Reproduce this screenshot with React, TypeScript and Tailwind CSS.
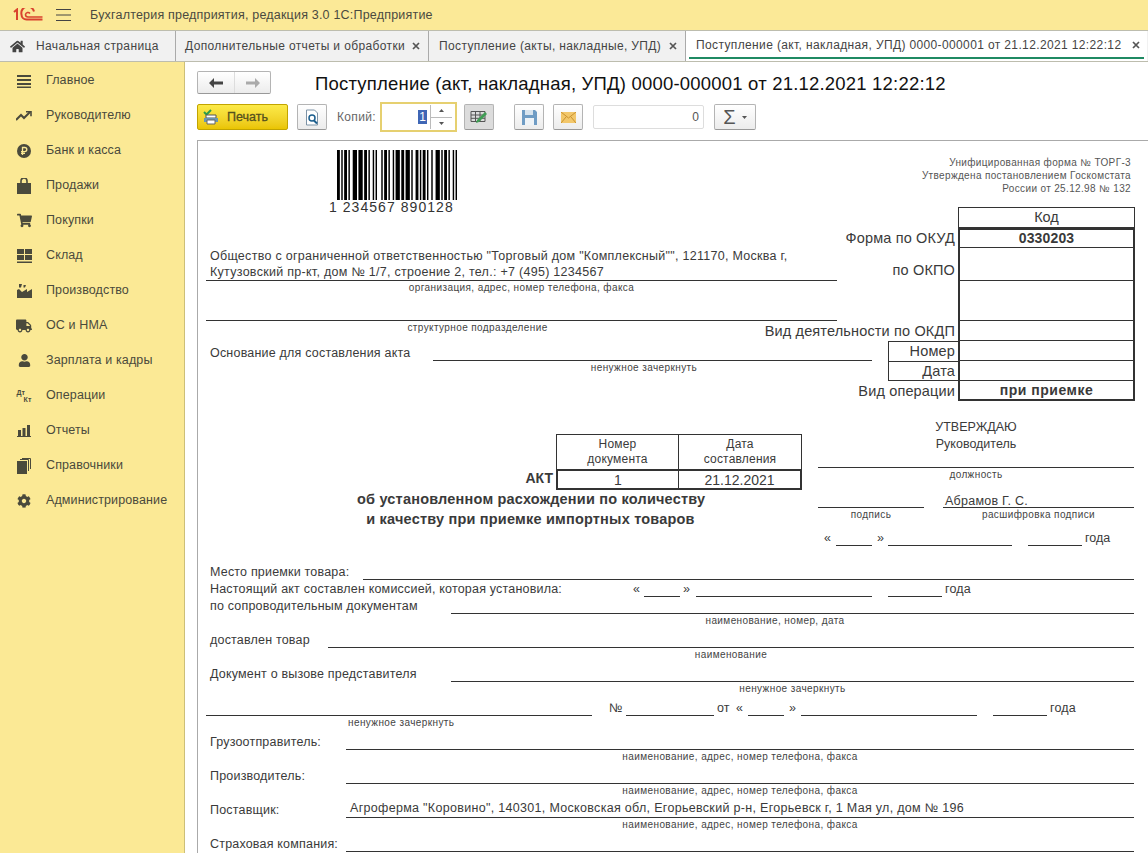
import { FaCog, FaHome, FaShoppingCart, FaTruck, FaUser } from 'react-icons/fa';

const barWidths = [2,1,1,1,2,1,1,2,3,1,3,1,2,1,1,2,1,1,1,3,1,1,2,1,1,2,1,1,3,1,2,1,3,1,1,2,2,1,1,1,2,1,1,2,1,2,3,1,1,1,2,1,1,2,1,1,1];

function Barcode() {
  let x = 0;
  const bars = barWidths.map((w, i) => {
    const rect = i % 2 === 0 ? <rect key={i} x={x} y="0" width={w} height="50" fill="#000" /> : null;
    x += w;
    return rect;
  });
  return (
    <svg width="120" height="50" viewBox={`0 0 ${x} 50`} preserveAspectRatio="none">
      {bars}
    </svg>
  );
}

function Bag() {
  return (
    <svg width="14" height="16" viewBox="0 0 14 16" fill="#4a4a3c">
      <path d="M0 5h14v11H0z" />
      <path d="M4 5V3a3 3 0 0 1 6 0v2" fill="none" stroke="#4a4a3c" strokeWidth="1.6" />
    </svg>
  );
}

const menu = [
  {
    name: 'Главное',
    icon: (
      <svg width="14" height="14" viewBox="0 0 14 14" fill="#4a4a3c">
        <path d="M0 1h14v2H0zM0 5h14v2H0zM0 9h14v2H0zM0 12.5h14v1.5H0z" />
      </svg>
    ),
  },
  {
    name: 'Руководителю',
    icon: (
      <svg width="16" height="10" viewBox="0 0 16 10" fill="none" stroke="#4a4a3c" strokeWidth="2">
        <path d="M0 9l5-5 3 3 6-6" />
        <path d="M10 0.8h5v4.4" strokeWidth="1.6" />
      </svg>
    ),
  },
  {
    name: 'Банк и касса',
    icon: (
      <svg width="14" height="14" viewBox="0 0 14 14">
        <circle cx="7" cy="7" r="7" fill="#4a4a3c" />
        <path d="M5.5 11V3.5h2.2a2 2 0 0 1 0 4.2H4M4 9.3h4" fill="none" stroke="#fbe995" strokeWidth="1.3" />
      </svg>
    ),
  },
  { name: 'Продажи', icon: <Bag /> },
  { name: 'Покупки', icon: <FaShoppingCart size={15} color="#4a4a3c" /> },
  {
    name: 'Склад',
    icon: (
      <svg width="15" height="14" viewBox="0 0 15 14" fill="#4a4a3c">
        <path d="M0 0h7v5H0zM8 0h7v5H8zM0 6h7v5H0zM8 6h7v5H8zM0 12.5h15V14H0z" />
      </svg>
    ),
  },
  {
    name: 'Производство',
    icon: (
      <svg width="15" height="14" viewBox="0 0 15 14" fill="#4a4a3c">
        <path d="M0 14V6l2-1 3 3 5-3v3l5-3v9zM2 0h3l-1 3.5H2zM6.5 1h2.500L8 3.500H6.500z" />
      </svg>
    ),
  },
  { name: 'ОС и НМА', icon: <FaTruck size={16} color="#4a4a3c" /> },
  { name: 'Зарплата и кадры', icon: <FaUser size={13} color="#4a4a3c" /> },
  {
    name: 'Операции',
    icon: (
      <div className="flex w-[15px] flex-col text-[7px] leading-[7px] font-bold text-[#4a4a3c]">
        <span>Дт</span>
        <span className="text-right">Кт</span>
      </div>
    ),
  },
  {
    name: 'Отчеты',
    icon: (
      <svg width="14" height="12" viewBox="0 0 14 12" fill="#4a4a3c">
        <path d="M1 5h3v6H1zM5.500 3h3v8h-3zM10 0h3v11h-3zM0 11h14v1H0z" />
      </svg>
    ),
  },
  {
    name: 'Справочники',
    icon: (
      <svg width="14" height="16" viewBox="0 0 14 16" fill="#4a4a3c">
        <path d="M0 3h10v13H0z" />
        <path d="M3 1.500h8.500V13M5 0.500h8.500V11" fill="none" stroke="#4a4a3c" />
      </svg>
    ),
  },
  { name: 'Администрирование', icon: <FaCog size={14} color="#4a4a3c" /> },
];

function Caption({ children, className }: { children: string; className: string }) {
  return <div className={`h-[16px] text-[10px] leading-[14px] tracking-[0.4px] whitespace-nowrap text-[#444] ${className}`}>{children}</div>;
}

function ToolButton({ children, className = 'bg-gradient-to-b from-white to-[#ececec]' }: { children: React.ReactNode; className?: string }) {
  return (
    <div className={`flex h-[26px] w-[30px] items-center justify-center rounded-[2px] border border-[#b4b4b4] border-b-[#999] ${className}`}>
      {children}
    </div>
  );
}

function CloseMark() {
  return (
    <svg width="8" height="8" viewBox="0 0 8 8" stroke="#555" strokeWidth="1.700">
      <path d="M1 1l6 6M7 1L1 7" />
    </svg>
  );
}

export default function App() {
  return (
    <div className="flex h-screen w-full flex-col overflow-hidden bg-white text-[12px] text-[#333]" style={{ fontFamily: '"Liberation Sans", Arial, sans-serif' }}>
      {/* Top bar */}
      <header className="flex h-[30px] shrink-0 items-center bg-[#fbe997]">
        <svg className="ml-[13px]" width="30" height="14" viewBox="0 0 30 14" fill="none" stroke="#d9432e" strokeWidth="2">
          <path d="M1 4l3-2.500V12" />
          <path d="M21 3.500A5 5 0 0 0 8.500 6.500a5 5 0 0 0 5 5h16" />
          <path d="M17 5.500a2.500 2.500 0 0 0-4.500 1 2.500 2.500 0 0 0 2.500 2.500h14.500" strokeWidth="1.500" />
        </svg>
        <svg className="ml-[13px]" width="15" height="14" viewBox="0 0 15 14" stroke="#444">
          <path d="M0 1.500h15M0 7h15M0 12.500h15" />
        </svg>
        <span className="ml-[19px] text-[12.5px] tracking-[0.2px] text-[#4a4a40]">Бухгалтерия предприятия, редакция 3.0 1С:Предприятие</span>
      </header>

      {/* Tabs */}
      <nav className="flex h-[32px] shrink-0 border-y border-[#bdbdae] bg-[#f1f1f1] text-[12px] tracking-[0.37px] text-[#444]">
        <div className="flex w-[176px] items-center border-r border-[#aaa] pl-[10px]">
          <FaHome size={15} color="#444" />
          <span className="ml-[11px]">Начальная страница</span>
        </div>
        <div className="flex w-[253px] items-center justify-between border-r border-[#aaa] pr-[8px] pl-[9px]">
          <span className="whitespace-nowrap">Дополнительные отчеты и обработки</span>
          <CloseMark />
        </div>
        <div className="flex w-[257px] items-center justify-between border-r border-[#aaa] pr-[8px] pl-[10px]">
          <span className="whitespace-nowrap">Поступление (акты, накладные, УПД)</span>
          <CloseMark />
        </div>
        <div className="flex w-[461px] flex-col bg-white">
          <div className="flex h-[26px] items-center justify-between pt-[2px] pr-[7px] pl-[10px]">
            <span className="whitespace-nowrap">Поступление (акт, накладная, УПД) 0000-000001 от 21.12.2021 12:22:12</span>
            <CloseMark />
          </div>
          <div className="mx-[3px] h-[2px] bg-[#1f8a63]" />
        </div>
      </nav>

      <div className="flex min-h-0 flex-1">
        {/* Sidebar */}
        <aside className="w-[185px] shrink-0 border-r border-[#cdbf78] bg-[#fbe995] pt-[1px]">
          {menu.map((item) => (
            <div key={item.name} className="flex h-[35px] items-center text-[12.500px] tracking-[0.12px] text-[#4a4a3c]">
              <div className="flex w-[46px] justify-center pl-[2px]">{item.icon}</div>
              <span>{item.name}</span>
            </div>
          ))}
        </aside>

        <main className="min-w-0 flex-1 pl-[12px]">
          {/* Title row */}
          <div className="flex h-[41px] items-start pt-[9px]">
            <div className="flex h-[23px] w-[74px] rounded-[2px] border border-[#b4b4b4] border-b-[#999] bg-gradient-to-b from-white to-[#ececec]">
              <div className="flex w-[37px] items-center justify-center border-r border-[#ddd]">
                <svg width="14" height="10" viewBox="0 0 14 10" fill="#444"><path d="M0 5l5-5v3.500h9v3H5V10z" /></svg>
              </div>
              <div className="flex flex-1 items-center justify-center">
                <svg width="14" height="10" viewBox="0 0 14 10" fill="#aaa"><path d="M14 5L9 0v3.500H0v3h9V10z" /></svg>
              </div>
            </div>
            <h1 className="mt-[1px] ml-[44px] text-[18.500px] leading-[23px] tracking-[0.2px] whitespace-nowrap text-[#111]">Поступление (акт, накладная, УПД) 0000-000001 от 21.12.2021 12:22:12</h1>
          </div>

          {/* Toolbar */}
          <div className="flex h-[38px] items-start pt-[1px]">
            <div className="flex h-[26px] w-[91px] items-center rounded-[2px] border border-[#c2a400] bg-gradient-to-b from-[#fcea47] to-[#eac500] pl-[5px] font-bold text-[#55501e]">
              <svg width="16" height="16" viewBox="0 0 16 16">
                <path d="M1 3l2.500 2.500L8 1" fill="none" stroke="#2d9c4a" strokeWidth="2" />
                <path d="M3 6h10v3H3z" fill="#fff" stroke="#555" />
                <path d="M1 9h14v4H1z" fill="#6b96b0" />
                <path d="M4 11h8v4H4z" fill="#fff" stroke="#666" />
              </svg>
              <span className="ml-[8px] text-[12.500px] font-normal [-webkit-text-stroke:0.3px_#55501e]">Печать</span>
            </div>
            <ToolButton className="ml-[9px] bg-gradient-to-b from-white to-[#ececec]">
              <svg width="16" height="17" viewBox="0 0 16 17" fill="none">
                <path d="M2.500 1h8l3 3v12h-11z" fill="#fff" stroke="#7d93a6" />
                <circle cx="8" cy="9" r="3" stroke="#1c5f8e" strokeWidth="1.500" />
                <path d="M10 11.500l3 3" stroke="#1c5f8e" strokeWidth="2" />
              </svg>
            </ToolButton>
            <span className="ml-[10px] w-[43px] text-[12px] leading-[26px] tracking-[0.35px] text-[#666]">Копий:</span>
            <div className="mt-[-2px] flex h-[30px] w-[77px] items-center justify-end border-2 border-[#e6d070] bg-white pr-[3px]">
              <span className="mr-[3px] bg-[#3f66b5] px-[1px] leading-[14px] text-white">1</span>
              <div className="flex h-[24px] w-[22px] flex-col border-l border-[#bbb]">
                <div className="flex flex-1 items-center justify-center border-b border-[#bbb]">
                  <svg width="5" height="3" viewBox="0 0 5 3" fill="#555"><path d="M2.500 0L5 3H0z" /></svg>
                </div>
                <div className="flex flex-1 items-center justify-center">
                  <svg width="5" height="3" viewBox="0 0 5 3" fill="#555"><path d="M2.500 3L5 0H0z" /></svg>
                </div>
              </div>
            </div>
            <ToolButton className="ml-[7px] bg-[#dcdcdc]">
              <svg width="18" height="17" viewBox="0 0 18 17" fill="none">
                <path d="M1 2.500h14v10H1zM1 6h14M1 9.300h14M5.500 2.500v10M10 2.500v10" stroke="#555" />
                <path d="M6 14l1-3 8-8 2 2-8 8z" fill="#3f9d54" />
              </svg>
            </ToolButton>
            <ToolButton className="ml-[20px] bg-gradient-to-b from-white to-[#ececec]">
              <svg width="15" height="15" viewBox="0 0 15 15">
                <path d="M0 0h13l2 2v13H0z" fill="#6f9cc4" />
                <path d="M3 0h8v5H3z" fill="#d8e4ee" />
                <path d="M3 8h9v7H3z" fill="#eef3f7" />
              </svg>
            </ToolButton>
            <ToolButton className="ml-[9px] bg-gradient-to-b from-white to-[#ececec]">
              <svg width="15" height="11" viewBox="0 0 15 11">
                <path d="M0 0h15v11H0z" fill="#f2c76b" />
                <path d="M0 0l7.500 6L15 0M0 11l5-6M15 11l-5-6" fill="none" stroke="#c8922f" />
              </svg>
            </ToolButton>
            <div className="mt-[1px] ml-[10px] flex h-[24px] w-[111px] items-center justify-end rounded-[2px] border border-[#ddd] pr-[4px] tracking-[0.2px] text-[#555]">0</div>
            <div className="ml-[10px] flex h-[26px] w-[42px] items-center justify-center gap-[6px] rounded-[2px] border border-[#b4b4b4] border-b-[#999] bg-gradient-to-b from-white to-[#ececec]">
              <span className="text-[20px] leading-none text-[#555]">Σ</span>
              <svg width="5" height="3" viewBox="0 0 5 3" fill="#555"><path d="M2.500 3L5 0H0z" /></svg>
            </div>
          </div>

          {/* Printed form */}
          <div className="mt-[-1px] h-[713px] overflow-hidden border-t border-l border-[#aaa] text-[12.500px] text-[#3a3a3a]">
            <div className="flex h-[260px]">
              <div className="w-[690px] shrink-0">
                <div className="h-[107px] pt-[9px] pl-[139px]">
                  <div className="flex h-[50px]"><Barcode /></div>
                  <div className="mt-[-1px] ml-[-8px] text-[14px] leading-[16px] tracking-[1.05px] whitespace-nowrap text-[#333]">1 234567 890128</div>
                </div>
                <div className="ml-[8px] h-[33px] w-[631px] border-b border-[#333] pl-[4px] leading-[16px] tracking-[0.28px] whitespace-nowrap">
                  <div>Общество с ограниченной ответственностью "Торговый дом "Комплексный"", 121170, Москва г,</div>
                  <div>Кутузовский пр-кт, дом № 1/7, строение 2, тел.: +7 (495) 1234567</div>
                </div>
                <Caption className="ml-[8px] w-[631px] text-center">организация, адрес, номер телефона, факса</Caption>
                <div className="ml-[8px] h-[24px] w-[631px] border-b border-[#333]" />
                <Caption className="ml-[8px] w-[543px] text-center">структурное подразделение</Caption>
                <div className="flex h-[24px] items-end pl-[12px] leading-[16px] tracking-[0.2px]">
                  <span className="w-[223px]">Основание для составления акта</span>
                  <div className="h-full w-[439px] border-b border-[#333]" />
                </div>
                <Caption className="ml-[235px] w-[422px] text-center">ненужное зачеркнуть</Caption>
              </div>

              <div className="w-[247px] shrink-0">
                <div className="h-[66px] pt-[15px] pr-[4px] text-right text-[10px] leading-[13px] tracking-[0.35px] whitespace-nowrap text-[#555]">
                  <div>Унифицированная форма № ТОРГ-3</div>
                  <div>Утверждена постановлением Госкомстата</div>
                  <div>России от 25.12.98 № 132</div>
                </div>
                <div className="ml-[70px] flex h-[21px] w-[177px] items-center justify-center border border-[#333] text-[14.500px]">Код</div>
                <div className="flex h-[20px] text-[14.500px] leading-[20px] tracking-[0.15px]">
                  <div className="flex w-[70px] justify-end pr-[3px] whitespace-nowrap">Форма по ОКУД</div>
                  <div className="w-[177px] border-x-2 border-t-2 border-b border-[#333] text-center text-[14px] leading-[17px] font-bold">0330203</div>
                </div>
                <div className="flex h-[33px] items-end text-[14.500px] leading-[21px] tracking-[0.15px]">
                  <div className="flex w-[70px] justify-end pr-[3px] whitespace-nowrap">по ОКПО</div>
                  <div className="h-full w-[177px] border-x-2 border-b border-[#333]" />
                </div>
                <div className="ml-[70px] h-[40px] w-[177px] border-x-2 border-b border-[#333]" />
                <div className="flex h-[20px] text-[14.500px] leading-[20px] tracking-[0.15px]">
                  <div className="flex w-[70px] justify-end pr-[3px] whitespace-nowrap">Вид деятельности по ОКДП</div>
                  <div className="w-[177px] border-x-2 border-b border-[#333]" />
                </div>
                <div className="flex h-[20px] text-[14.500px] leading-[18px] tracking-[0.15px]">
                  <div className="w-[70px] border-t border-l border-[#333] pr-[3px] text-right">Номер</div>
                  <div className="w-[177px] border-x-2 border-b border-[#333]" />
                </div>
                <div className="flex h-[20px] text-[14.500px] leading-[18px] tracking-[0.15px]">
                  <div className="w-[70px] border-y border-l border-[#333] pr-[3px] text-right">Дата</div>
                  <div className="w-[177px] border-x-2 border-b border-[#333]" />
                </div>
                <div className="flex h-[20px] text-[14.500px] leading-[20px] tracking-[0.15px]">
                  <div className="flex w-[70px] justify-end pr-[3px] whitespace-nowrap">Вид операции</div>
                  <div className="w-[177px] border-x-2 border-b-2 border-[#333] text-center text-[14px] leading-[19px] font-bold tracking-[0.5px]">при приемке</div>
                </div>
              </div>
            </div>

            {/* Act heading and approval block */}
            <div className="flex h-[160px]">
              <div className="w-[620px] shrink-0 pt-[33px]">
                <div className="ml-[358px] flex h-[35px] w-[246px] border-x border-t border-[#333] text-center text-[12px] leading-[15px] tracking-[0.2px]">
                  <div className="w-[122px] border-r border-[#333] pt-[2px]">Номер<br />документа</div>
                  <div className="flex-1 pt-[2px]">Дата<br />составления</div>
                </div>
                <div className="flex h-[21px] text-[14px] leading-[18px]">
                  <div className="w-[358px] pr-[3px] text-right font-bold">АКТ</div>
                  <div className="flex w-[246px] border-2 border-[#333] text-center">
                    <div className="w-[121px] border-r border-[#333]">1</div>
                    <div className="flex-1">21.12.2021</div>
                  </div>
                </div>
                <div className="mt-[-1px] ml-[159px] w-[347px] text-center text-[14.500px] leading-[20px] font-bold tracking-[0.2px] whitespace-nowrap">
                  <div>об установленном расхождении по количеству</div>
                  <div>и качеству при приемке импортных товаров</div>
                </div>
              </div>
              <div className="w-[316px] shrink-0 pt-[18px]">
                <div className="text-center leading-[17px]">
                  <div>УТВЕРЖДАЮ</div>
                  <div>Руководитель</div>
                </div>
                <div className="h-[15px] border-b border-[#333]" />
                <Caption className="text-center">должность</Caption>
                <div className="flex h-[24px] items-end leading-[16px]">
                  <div className="h-full w-[106px] border-b border-[#333]" />
                  <div className="ml-[19px] h-full flex-1 border-b border-[#333] pt-[9px] pl-[2px] tracking-[0.25px]">Абрамов Г. С.</div>
                </div>
                <div className="flex">
                  <Caption className="w-[106px] text-center">подпись</Caption>
                  <Caption className="ml-[19px] flex-1 text-center">расшифровка подписи</Caption>
                </div>
                <div className="flex h-[22px] items-end pl-[6px] leading-[16px]">
                  <span className="w-[12px]">«</span>
                  <div className="h-full w-[36px] border-b border-[#333]" />
                  <span className="w-[16px] pl-[5px]">»</span>
                  <div className="h-full w-[124px] border-b border-[#333]" />
                  <div className="ml-[16px] h-full w-[54px] border-b border-[#333]" />
                  <span className="ml-[3px]">года</span>
                </div>
              </div>
            </div>

            {/* Detail rows */}
            <div className="w-[936px] leading-[16px] tracking-[0.19px]">
              <div className="flex h-[19px] items-end pl-[12px]">
                <span className="w-[153px] whitespace-nowrap">Место приемки товара:</span>
                <div className="h-full flex-1 border-b border-[#333]" />
              </div>
              <div className="flex h-[17px] items-end pl-[12px]">
                <span className="w-[423px] whitespace-nowrap">Настоящий акт составлен комиссией, которая установила:</span>
                <span className="w-[11px]">«</span>
                <div className="h-full w-[36px] border-b border-[#333]" />
                <span className="w-[16px] pl-[3px]">»</span>
                <div className="h-full w-[176px] border-b border-[#333]" />
                <div className="ml-[16px] h-full w-[54px] border-b border-[#333]" />
                <span className="ml-[3px]">года</span>
              </div>
              <div className="flex h-[17px] items-end pl-[12px]">
                <span className="w-[241px] whitespace-nowrap">по сопроводительным документам</span>
                <div className="h-full flex-1 border-b border-[#333]" />
              </div>
              <Caption className="ml-[253px] w-[648px] text-center">наименование, номер, дата</Caption>
              <div className="flex h-[18px] items-end pl-[12px]">
                <span className="w-[118px]">доставлен товар</span>
                <div className="h-full flex-1 border-b border-[#333]" />
              </div>
              <Caption className="ml-[130px] w-[806px] text-center">наименование</Caption>
              <div className="flex h-[18px] items-end pl-[12px]">
                <span className="w-[241px] whitespace-nowrap">Документ о вызове представителя</span>
                <div className="h-full flex-1 border-b border-[#333]" />
              </div>
              <Caption className="ml-[253px] w-[683px] text-center">ненужное зачеркнуть</Caption>
              <div className="flex h-[18px] items-end pl-[8px]">
                <div className="h-full w-[386px] border-b border-[#333]" />
                <span className="ml-[17px] w-[17px]">№</span>
                <div className="h-full w-[88px] border-b border-[#333]" />
                <span className="ml-[3px] w-[19px]">от</span>
                <span className="w-[12px]">«</span>
                <div className="h-full w-[36px] border-b border-[#333]" />
                <span className="w-[17px] pl-[5px]">»</span>
                <div className="h-full w-[176px] border-b border-[#333]" />
                <div className="ml-[16px] h-full w-[54px] border-b border-[#333]" />
                <span className="ml-[3px]">года</span>
              </div>
              <div className="ml-[150px] h-[12px] text-[10px] leading-[14px] tracking-[0.4px] text-[#444]">ненужное зачеркнуть</div>
              <div className="flex h-[22px] items-end pl-[12px]">
                <span className="w-[136px]">Грузоотправитель:</span>
                <div className="h-full flex-1 border-b border-[#333]" />
              </div>
              <Caption className="ml-[148px] w-[788px] text-center">наименование, адрес, номер телефона, факса</Caption>
              <div className="flex h-[18px] items-end pl-[12px]">
                <span className="w-[136px]">Производитель:</span>
                <div className="h-full flex-1 border-b border-[#333]" />
              </div>
              <Caption className="ml-[148px] w-[788px] text-center">наименование, адрес, номер телефона, факса</Caption>
              <div className="flex h-[18px] items-end pl-[12px]">
                <span className="w-[136px]">Поставщик:</span>
                <div className="h-full flex-1 border-b border-[#333] pl-[4px] tracking-[0.31px] whitespace-nowrap">Агроферма "Коровино", 140301, Московская обл, Егорьевский р-н, Егорьевск г, 1 Мая ул, дом № 196</div>
              </div>
              <Caption className="ml-[148px] w-[788px] text-center">наименование, адрес, номер телефона, факса</Caption>
              <div className="flex h-[18px] items-end pl-[12px]">
                <span className="w-[136px] whitespace-nowrap">Страховая компания:</span>
                <div className="h-full flex-1 border-b border-[#333]" />
              </div>
            </div>
          </div>
        </main>
      </div>
    </div>
  );
}
